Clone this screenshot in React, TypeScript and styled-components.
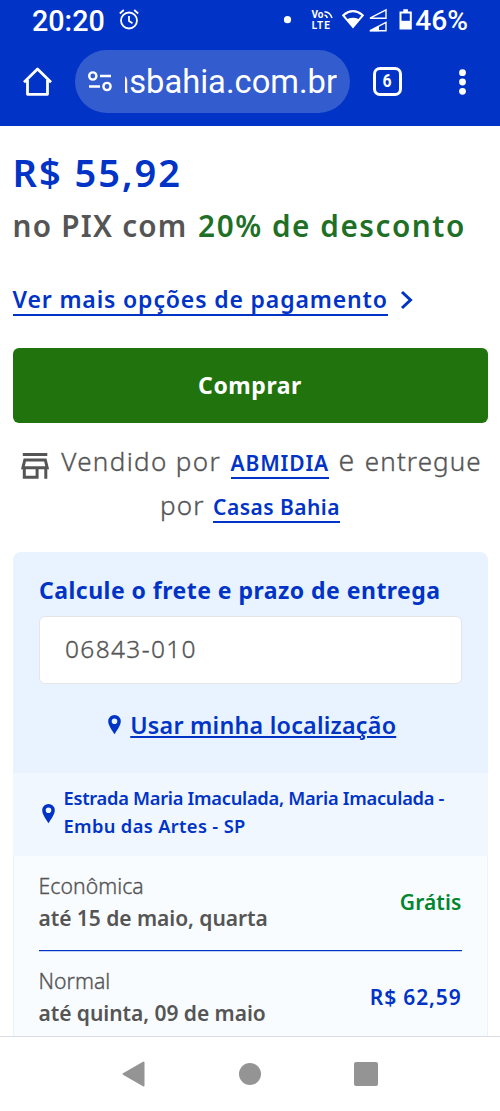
import React from 'react';
import styled, { createGlobalStyle, css } from 'styled-components';

const BLUE = '#0033c6';
const GRAY = '#555555';

const regularText = css`
  font-weight: 300;
  color: ${GRAY};
  -webkit-text-stroke: 0.35px ${GRAY};
`;

const GlobalStyle = createGlobalStyle`
  * { box-sizing: border-box; }
  body { margin: 0; background: #fff; font-family: 'Noto Sans', sans-serif; }
  p, h2 { margin: 0; }
`;

const Screen = styled.div`
  width: 500px;
  height: 1111px;
  display: flex;
  flex-direction: column;
  overflow: hidden;
  background: #fff;
`;

const Header = styled.header`
  height: 126px;
  flex: none;
  background: ${BLUE};
  color: #fff;
  font-family: Roboto, sans-serif;
`;

const StatusBar = styled.div`
  height: 40px;
  padding: 2px 32px 0 32px;
  display: flex;
  align-items: center;
  justify-content: space-between;
  font-size: 28.7px;
  font-weight: 500;
  line-height: 36px;
`;

const StatusGroup = styled.div`
  display: flex;
  align-items: center;
`;

const Battery = styled.span`
  font-size: 28.2px;
`;

const AlarmIcon = styled.svg`
  margin: -4px 0 0 14px;
`;

const SignalIcons = styled.svg`
  margin: -3px 0 0 0;
`;

const Toolbar = styled.div`
  height: 82px;
  padding: 1px 27px 0 22px;
  display: flex;
  align-items: center;
`;

const AddressPill = styled.div`
  width: 275px;
  height: 63px;
  margin: -1px 23px 0 23px;
  padding: 0 13px 0 12px;
  border-radius: 32px;
  background: #335ccf;
  display: flex;
  align-items: center;
  gap: 12px;
`;

const Address = styled.div`
  flex: 1;
  min-width: 0;
  height: 50px;
  overflow: hidden;
  display: flex;
  justify-content: flex-end;
  font-size: 32.7px;
  line-height: 52px;
`;

const TabCount = styled.div`
  width: 29px;
  height: 29px;
  border: 3px solid #fff;
  border-radius: 7px;
  display: flex;
  align-items: center;
  justify-content: center;
  font-size: 17.5px;
  font-weight: 700;
  line-height: 1;
`;

const TabDigit = styled.span`
  transform: scaleX(0.9);
`;

const MenuIcon = styled.svg`
  margin-left: auto;
`;

const Content = styled.main`
  flex: 1;
  min-height: 0;
  overflow: hidden;
  padding: 20px 12.5px 0;
`;

const Price = styled.p`
  font-size: 38px;
  line-height: 52px;
  font-weight: 600;
  letter-spacing: 2px;
  color: ${BLUE};
`;

const PixLine = styled.p`
  margin-top: 6px;
  display: flex;
  gap: 10.5px;
  font-size: 29.7px;
  line-height: 44px;
  font-weight: 600;
  letter-spacing: 1.25px;
  color: ${GRAY};
  white-space: nowrap;
`;

const Discount = styled.span`
  color: #1f7026;
  letter-spacing: 1.55px;
`;

const PaymentLine = styled.div`
  margin-top: 36px;
  height: 32px;
  display: flex;
  align-items: center;
  gap: 12.5px;
`;

const PaymentLink = styled.a`
  border-bottom: 2px solid ${BLUE};
  font-size: 23px;
  line-height: 30px;
  font-weight: 600;
  letter-spacing: 0.86px;
  color: ${BLUE};
  white-space: nowrap;
`;

const BuyButton = styled.button`
  display: block;
  width: 100%;
  height: 75px;
  margin-top: 32px;
  padding: 0 0 2px;
  border: 0;
  border-radius: 6px;
  background: #20730d;
  color: #fff;
  font: 700 23px 'Noto Sans', sans-serif;
  letter-spacing: 0.55px;
`;

const Seller = styled.div`
  margin-top: 15px;
`;

const SellerLine = styled.p<{ $last?: boolean }>`
  height: 45px;
  padding-left: ${p => (p.$last ? '0' : '3px')};
  display: flex;
  justify-content: center;
  align-items: baseline;
  gap: ${p => (p.$last ? '8.5px' : '9.5px')};
  font-size: 26px;
  line-height: 45px;
  letter-spacing: 1.1px;
  white-space: nowrap;
  ${regularText}
`;

const SellerLead = styled.span`
  letter-spacing: 1.36px;
`;

const StoreIcon = styled.svg`
  align-self: center;
  margin: 10px 2.5px 0 0;
`;

const SellerLink = styled.a<{ $tracking: string }>`
  border-bottom: 2px solid ${BLUE};
  font-size: 21px;
  line-height: 28px;
  font-weight: 600;
  letter-spacing: ${p => p.$tracking};
  color: ${BLUE};
  -webkit-text-stroke: 0;
`;

const Conjunction = styled.span`
  font-size: 28.5px;
`;

const ShippingPanel = styled.section`
  margin-top: 24px;
  border-radius: 8px 8px 0 0;
  overflow: hidden;
  background: #e8f3ff;
  color: ${BLUE};
`;

const ZipForm = styled.div`
  height: 221px;
  padding: 21px 26px 0 26.5px;
`;

const PanelTitle = styled.h2`
  font-size: 23px;
  line-height: 34px;
  font-weight: 700;
  letter-spacing: 0.47px;
  white-space: nowrap;
`;

const ZipField = styled.div`
  height: 68px;
  margin-top: 9px;
  padding: 0 25px;
  border: 1.5px solid #e3e5e8;
  border-radius: 6px;
  background: #fff;
  font-size: 24.5px;
  line-height: 64px;
  letter-spacing: 1.35px;
  ${regularText}
`;

const LocateLine = styled.div`
  margin-top: 26px;
  height: 30px;
  padding-left: 4px;
  display: flex;
  justify-content: center;
  align-items: center;
  gap: 9px;
`;

const LocateLink = styled.a`
  font-size: 23.3px;
  line-height: 30px;
  font-weight: 600;
  letter-spacing: 0.22px;
  text-decoration: underline;
  text-decoration-thickness: 2px;
  text-underline-offset: 2px;
  white-space: nowrap;
`;

const AddressBox = styled.div`
  height: 83px;
  padding: 11px 29px 0;
  display: flex;
  gap: 9px;
  background: #f0f7ff;
  font-size: 18.3px;
  line-height: 28.3px;
  font-weight: 600;
  white-space: nowrap;
`;

const AddressPin = styled.svg`
  margin-top: 20px;
`;

const Street = styled.p`
  letter-spacing: -0.28px;
`;

const City = styled.p`
  letter-spacing: 0.35px;
`;

const Rates = styled.div`
  height: 220px;
  padding: 0 25px;
  border: solid #e8f3ff;
  border-width: 0 1px;
  background: #f9fcff;
`;

const Rate = styled.div`
  height: 94px;
  padding-bottom: 3px;
  display: flex;
  justify-content: space-between;
  align-items: center;
  white-space: nowrap;
`;

const Divider = styled.div`
  height: 1px;
  background: ${BLUE};
  box-shadow: 0 1px 0 #c3d1f3;
`;

const RateName = styled.p`
  font-size: 21.2px;
  line-height: 32px;
  letter-spacing: 0.05px;
  ${regularText}
`;

const RateDate = styled.p`
  font-size: 21px;
  line-height: 32px;
  font-weight: 600;
  letter-spacing: -0.05px;
  color: ${GRAY};
`;

const RatePrice = styled.span<{ $free?: boolean }>`
  font-size: 21px;
  line-height: 32px;
  font-weight: 600;
  letter-spacing: ${p => (p.$free ? '0.1px' : '0.85px')};
  color: ${p => (p.$free ? '#00862f' : BLUE)};
`;

const NavBar = styled.nav`
  height: 75px;
  flex: none;
  border-top: 1px solid #d9dde3;
  padding: 0 122px;
  display: flex;
  align-items: center;
  justify-content: space-between;
`;

const PIN = 'M6.5 0a6.3 6.3 0 0 0-6.3 6.3C.2 10.6 4 15 6.5 19.3 9 15 12.8 10.6 12.8 6.3A6.3 6.3 0 0 0 6.5 0Zm0 3.5a2.8 2.8 0 1 1 0 5.6 2.8 2.8 0 0 1 0-5.6Z';

export default function App() {
  return (
    <>
      <GlobalStyle />
      <Screen>
        <Header>
          <StatusBar>
            <StatusGroup>
              <span>20:20</span>
              <AlarmIcon width="20" height="21" viewBox="0 0 20 21" fill="none" stroke="#fff" strokeWidth="1.8">
                <circle cx="10" cy="11.5" r="8" />
                <path d="M10 7v5l3.5 2.2M.8 4.5 4.8 1M19.2 4.5 15.2 1" />
              </AlarmIcon>
            </StatusGroup>
            <StatusGroup>
              <SignalIcons width="132" height="24" viewBox="283 7 132 24" fill="#fff">
                <circle cx="287.5" cy="18.7" r="3.6" />
                <text x="311.5" y="16.6" fontSize="10" fontWeight="700" textLength="12" lengthAdjust="spacingAndGlyphs">Vo</text>
                <text x="311.8" y="28" fontSize="10" fontWeight="700" textLength="18" lengthAdjust="spacing">LTE</text>
                <path d="M324.5 14.2q2.2 0 2.8 2.8M324.5 10.700q5.500.3 7.500 6.300" fill="none" stroke="#fff" strokeWidth="1.5" />
                <path d="M341.8 14.2Q353 4 364.2 14.2L353 27.5Z" />
                <path d="M344.7 14.5Q353 8 361.3 14.5L358.5 18Q353 15.3 347.5 18Z" fill={BLUE} />
                <path d="M370 17.2 386 9v8.2ZM370 29.7 386 21.5v8.2Z" fill="none" stroke="#fff" strokeWidth="1.4" />
                <path d="M369 30.3 379 25v5.3Z" />
                <path d="M399.5 10.5h3.8V8.3h4.6v2.2h3.900v18h-12.300Z" />
                <path d="M401.5 12.5h8.3v7.3h-8.3Z" fill={BLUE} />
              </SignalIcons>
              <Battery>46%</Battery>
            </StatusGroup>
          </StatusBar>
          <Toolbar>
            <svg width="30" height="30" viewBox="0 0 30 30" fill="none" stroke="#fff" strokeWidth="2.8" strokeLinejoin="round">
              <path d="M2 15.2 15.5 2 29 15.2M5.5 13v14.3h20V13" />
            </svg>
            <AddressPill>
              <svg width="26" height="22" viewBox="0 0 26 22" fill="none" stroke="#fff" strokeWidth="2.4">
                <circle cx="5.8" cy="6" r="3.6" />
                <circle cx="20" cy="16.5" r="3.6" />
                <path d="M13 6h11M2 16.5h11" />
              </svg>
              <Address><span>casasbahia.com.br</span></Address>
            </AddressPill>
            <TabCount><TabDigit>6</TabDigit></TabCount>
            <MenuIcon width="22" height="28" viewBox="0 0 22 28" fill="#fff">
              <circle cx="11.5" cy="4.7" r="3.4" />
              <circle cx="11.5" cy="14" r="3.4" />
              <circle cx="11.5" cy="23.3" r="3.4" />
            </MenuIcon>
          </Toolbar>
        </Header>

        <Content>
          <Price>R$ 55,92</Price>
          <PixLine>
            <span>no PIX com</span>
            <Discount>20% de desconto</Discount>
          </PixLine>
          <PaymentLine>
            <PaymentLink>Ver mais opções de pagamento</PaymentLink>
            <svg width="14" height="20" viewBox="0 0 14 20" fill="none" stroke={BLUE} strokeWidth="3">
              <path d="M2 2l8.5 8-8.5 8" />
            </svg>
          </PaymentLine>

          <BuyButton>Comprar</BuyButton>

          <Seller>
            <SellerLine>
              <StoreIcon width="28" height="26" viewBox="0 0 28 26" fill="none" stroke={GRAY} strokeWidth="3">
                <path d="M1.8 1.500h24.500M3.800 7h20.500l1.900 7.700H1.900ZM3.300 14.700v9.500h12.800v-9.500M24.800 14.700v11" />
              </StoreIcon>
              <SellerLead>Vendido por</SellerLead>
              <SellerLink $tracking="0.85px">ABMIDIA</SellerLink>
              <Conjunction>e</Conjunction>
              <span>entregue</span>
            </SellerLine>
            <SellerLine $last>
              <span>por</span>
              <SellerLink $tracking="0.45px">Casas Bahia</SellerLink>
            </SellerLine>
          </Seller>

          <ShippingPanel>
            <ZipForm>
              <PanelTitle>Calcule o frete e prazo de entrega</PanelTitle>
              <ZipField>06843-010</ZipField>
              <LocateLine>
                <svg width="13" height="20" viewBox="0 0 13 20" fill={BLUE}><path d={PIN} /></svg>
                <LocateLink>Usar minha localização</LocateLink>
              </LocateLine>
            </ZipForm>
            <AddressBox>
              <AddressPin width="13" height="20" viewBox="0 0 13 20" fill={BLUE}><path d={PIN} /></AddressPin>
              <div>
                <Street>Estrada Maria Imaculada, Maria Imaculada -</Street>
                <City>Embu das Artes - SP</City>
              </div>
            </AddressBox>
            <Rates>
              <Rate>
                <div>
                  <RateName>Econômica</RateName>
                  <RateDate>até 15 de maio, quarta</RateDate>
                </div>
                <RatePrice $free>Grátis</RatePrice>
              </Rate>
              <Divider />
              <Rate>
                <div>
                  <RateName>Normal</RateName>
                  <RateDate>até quinta, 09 de maio</RateDate>
                </div>
                <RatePrice>R$ 62,59</RatePrice>
              </Rate>
            </Rates>
          </ShippingPanel>
        </Content>

        <NavBar>
          <svg width="23" height="26" viewBox="0 0 23 26" fill="#949494" stroke="#949494" strokeWidth="2" strokeLinejoin="round">
            <path d="M21.5 1.5v23L1.5 13Z" />
          </svg>
          <svg width="22" height="22" viewBox="0 0 22 22" fill="#949494"><circle cx="11" cy="11" r="11" /></svg>
          <svg width="24" height="24" viewBox="0 0 24 24" fill="#949494"><rect width="24" height="24" rx="2" /></svg>
        </NavBar>
      </Screen>
    </>
  );
}
